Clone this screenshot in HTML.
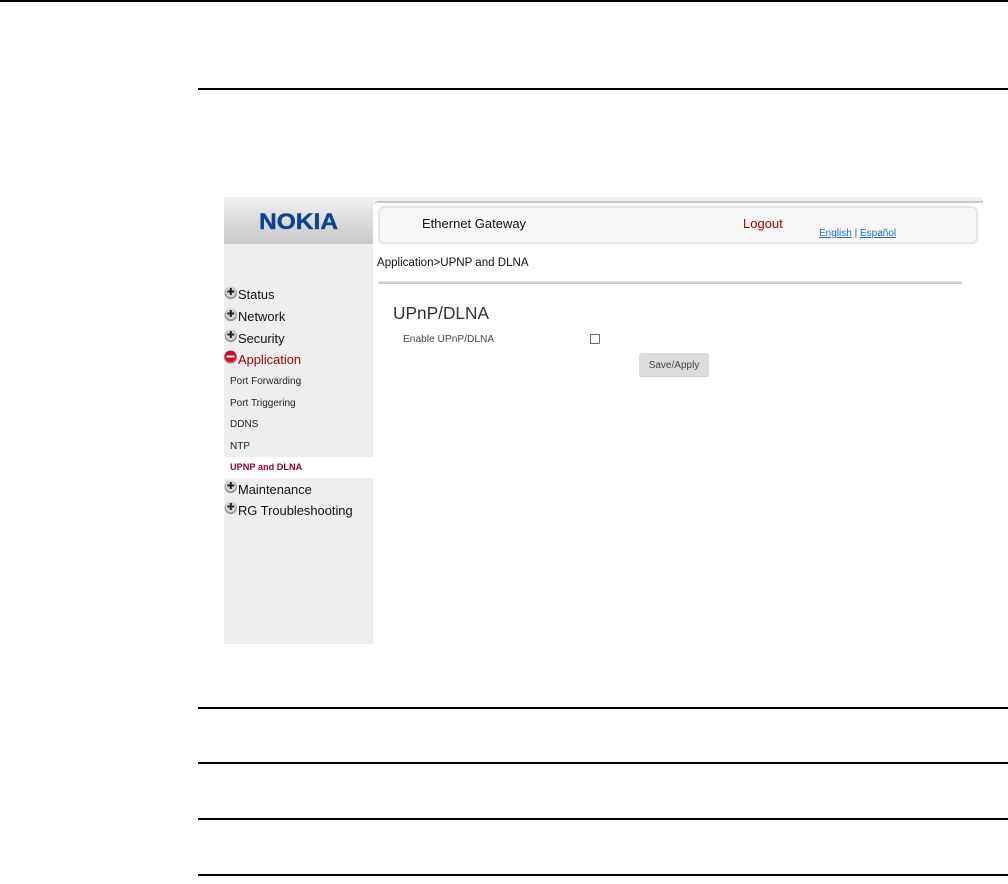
<!DOCTYPE html>
<html><head><meta charset="utf-8"><style>
html,body{margin:0;padding:0;background:#fff}
body{width:1008px;height:884px;position:relative;overflow:hidden;font-family:"Liberation Sans",sans-serif;color:#000}
div,a,svg{position:absolute}
.t{white-space:nowrap}
.r{height:2px;background:#000;left:198px;right:0}
.m{left:238px;font-size:12.9px;line-height:15px;white-space:nowrap;color:#111}
.s{left:230px;font-size:10px;line-height:12px;white-space:nowrap;color:#222}
</style></head><body>
<div style="left:0;right:0;top:0;height:2px;background:#000"></div>
<div class="r" style="top:88px"></div>
<div class="r" style="top:707px"></div>
<div class="r" style="top:762px"></div>
<div class="r" style="top:818px"></div>
<div class="r" style="top:874px"></div>

<div style="left:224px;top:197px;width:149px;height:447px;background:#eee"></div>
<div style="left:224px;top:197px;width:149px;height:47px;background:linear-gradient(#f2f1f1,#c9c9c9)"></div>
<div class="t" style="left:259px;top:209px;width:71px;font-size:22px;line-height:26px;font-weight:bold;color:#124191;-webkit-text-stroke:.4px #124191;transform:scaleX(1.115);transform-origin:0 0">NOKIA</div>

<div style="left:373px;top:197px;width:610px;height:4px;background:#f0f0f0"></div>
<div style="left:373px;top:201px;width:610px;height:43px;box-sizing:border-box;background:#fff;border-top:2px solid #c8c8c8;border-radius:5px 0 0 0"></div>
<div style="left:378px;top:206px;width:596px;height:34px;background:#f7f7f7;border:2px solid #e6e6e6;border-radius:6px"></div>
<div class="t" style="left:422px;top:216px;font-size:13px;line-height:16px;color:#111">Ethernet Gateway</div>
<div class="t" style="left:743px;top:216px;font-size:13px;line-height:16px;color:#990000">Logout</div>
<div class="t" style="left:819px;top:228px;font-size:10px;line-height:12px;color:#555"><span style="color:#1a6fd0;text-decoration:underline">English</span> | <span style="color:#1a6fd0;text-decoration:underline">Español</span></div>

<div class="t" style="left:377px;top:256px;font-size:11.55px;line-height:14px;color:#111">Application&gt;UPNP and DLNA</div>
<div style="left:378px;top:281px;width:584px;height:3px;background:linear-gradient(#e6e6e6,#c4c4c4)"></div>
<div class="t" style="left:393px;top:304px;font-size:17.3px;line-height:19px;color:#333">UPnP/DLNA</div>
<div class="t" style="left:403px;top:334px;font-size:10.2px;line-height:12px;color:#3c4650">Enable UPnP/DLNA</div>
<div style="left:590px;top:334px;width:8px;height:8px;border:1px solid #666;background:#fff;border-radius:1px"></div>
<div style="left:639px;top:353px;width:70px;height:24px;background:#dcdcdc;border-radius:3px;border-bottom:1px solid #ccc;box-sizing:border-box"></div>
<div class="t" style="left:639px;top:360px;width:70px;text-align:center;font-size:10px;line-height:12px;color:#444">Save/Apply</div>

<svg style="left:224px;top:286px" width="14" height="14" viewBox="0 0 14 14"><circle cx="6.8" cy="7" r="6.2" fill="#999"/><circle cx="6.8" cy="6" r="5.2" fill="#d6d6d6"/><path d="M3.3 5.5h7M6.8 2v7" stroke="#222" stroke-width="2"/></svg>
<svg style="left:224px;top:308px" width="14" height="14" viewBox="0 0 14 14"><circle cx="6.8" cy="7" r="6.2" fill="#999"/><circle cx="6.8" cy="6" r="5.2" fill="#d6d6d6"/><path d="M3.3 5.5h7M6.8 2v7" stroke="#222" stroke-width="2"/></svg>
<svg style="left:224px;top:329px" width="14" height="14" viewBox="0 0 14 14"><circle cx="6.8" cy="7" r="6.2" fill="#999"/><circle cx="6.8" cy="6" r="5.2" fill="#d6d6d6"/><path d="M3.3 5.5h7M6.8 2v7" stroke="#222" stroke-width="2"/></svg>
<svg style="left:224px;top:350px" width="14" height="14" viewBox="0 0 14 14"><circle cx="6.5" cy="7" r="6.5" fill="#d85060"/><circle cx="6.5" cy="6.2" r="5.5" fill="#c8102e"/><path d="M2.5 6.5h8" stroke="#eee" stroke-width="2"/></svg>
<svg style="left:224px;top:480px" width="14" height="14" viewBox="0 0 14 14"><circle cx="6.8" cy="7" r="6.2" fill="#999"/><circle cx="6.8" cy="6" r="5.2" fill="#d6d6d6"/><path d="M3.3 5.5h7M6.8 2v7" stroke="#222" stroke-width="2"/></svg>
<svg style="left:224px;top:501px" width="14" height="14" viewBox="0 0 14 14"><circle cx="6.8" cy="7" r="6.2" fill="#999"/><circle cx="6.8" cy="6" r="5.2" fill="#d6d6d6"/><path d="M3.3 5.5h7M6.8 2v7" stroke="#222" stroke-width="2"/></svg>

<div class="m" style="top:287px">Status</div>
<div class="m" style="top:309px">Network</div>
<div class="m" style="top:331px">Security</div>
<div class="m" style="top:352px;color:#990000">Application</div>
<div class="s" style="top:376px">Port Forwarding</div>
<div class="s" style="top:398px">Port Triggering</div>
<div class="s" style="top:419px">DDNS</div>
<div class="s" style="top:441px">NTP</div>
<div style="left:224px;top:457px;width:149px;height:21px;background:#fff"></div>
<div class="s" style="top:461px;color:#990033;font-weight:bold;font-size:9.2px">UPNP and DLNA</div>
<div class="m" style="top:482px">Maintenance</div>
<div class="m" style="top:503px">RG Troubleshooting</div>
</body></html>
